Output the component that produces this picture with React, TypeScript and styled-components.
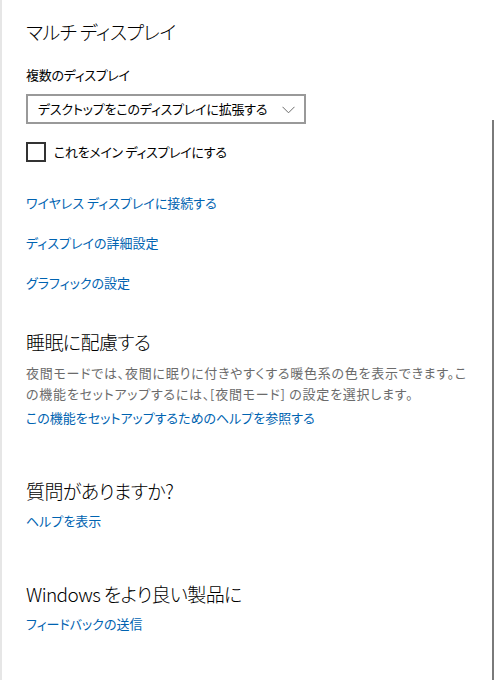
import React from "react";
import styled, { createGlobalStyle } from "styled-components";

const GlobalStyle = createGlobalStyle`
  html, body {
    margin: 0;
    padding: 0;
    background: #ffffff;
  }
  body {
    font-family: "Noto Sans CJK JP", "Noto Sans", sans-serif;
    font-feature-settings: "palt";
    color: #000000;
  }
`;

const LINKS = ["ワイヤレス ディスプレイに接続する", "ディスプレイの詳細設定", "グラフィックの設定"];

export default function App() {
  return (
    <>
      <GlobalStyle />
      <Page>
        <Content>
          <Heading>マルチ ディスプレイ</Heading>
          <Label>複数のディスプレイ</Label>
          <Select>
            <span>デスクトップをこのディスプレイに拡張する</span>
            <svg width="13" height="8" viewBox="0 0 13 8">
              <path d="M0.5 0.8 L6.5 6.8 L12.5 0.8" fill="none" stroke="#6b6b6b" strokeWidth="1" />
            </svg>
          </Select>
          <CheckRow>
            <CheckBox />
            <span>これをメイン ディスプレイにする</span>
          </CheckRow>
          <LinkList>
            {LINKS.map((text) => (
              <Link key={text}>{text}</Link>
            ))}
          </LinkList>

          <Heading $top={35}>睡眠に配慮する</Heading>
          <Paragraph>
            夜間モードでは、夜間に眠りに付きやすくする暖色系の色を表示できます。この機能をセットアップするには、[夜間モード] の設定を選択します。
          </Paragraph>
          <Link $top={4}>この機能をセットアップするためのヘルプを参照する</Link>

          <Heading $top={49}>質問がありますか?</Heading>
          <Link $top={6}>ヘルプを表示</Link>

          <Heading $top={49}>Windows をより良い製品に</Heading>
          <Link $top={6}>フィードバックの送信</Link>
        </Content>
        <ScrollThumb />
      </Page>
    </>
  );
}

const Page = styled.div`
  position: relative;
  width: 496px;
  height: 680px;
  box-sizing: border-box;
  border-left: 2px solid #e6e6e6;
  background: #ffffff;
  overflow: hidden;
`;

const Content = styled.div`
  display: flex;
  flex-direction: column;
  align-items: flex-start;
  padding: 18px 0 0 24px;
`;

const ScrollThumb = styled.div`
  position: absolute;
  top: 120px;
  bottom: 0;
  right: 2px;
  width: 2px;
  background: #7a7a7a;
`;

const Heading = styled.div<{ $top?: number }>`
  margin-top: ${(p) => p.$top ?? 0}px;
  font-size: 19px;
  line-height: 28px;
  font-weight: 300;
  letter-spacing: -0.6px;
  color: #000000;
`;

const Label = styled.div`
  margin-top: 19px;
  font-size: 13px;
  line-height: 20px;
  letter-spacing: -0.3px;
  color: #000000;
`;

const Select = styled.div`
  margin-top: 9px;
  width: 280px;
  height: 30px;
  box-sizing: border-box;
  border: 2px solid #999999;
  padding: 0 9px 0 10px;
  display: flex;
  align-items: center;
  justify-content: space-between;
  font-size: 13px;
  letter-spacing: -0.2px;
  white-space: nowrap;
  color: #000000;
  line-height: 20px;

  svg {
    margin-top: 1px;
    flex-shrink: 0;
  }
`;

const CheckRow = styled.div`
  margin-top: 18px;
  display: flex;
  align-items: center;
  gap: 8px;
  font-size: 13px;
  line-height: 20px;
  letter-spacing: -0.3px;
  color: #000000;
`;

const CheckBox = styled.div`
  width: 20px;
  height: 20px;
  box-sizing: border-box;
  border: 2px solid #333333;
`;

const LinkList = styled.div`
  margin-top: 31px;
  display: flex;
  flex-direction: column;
  gap: 20px;
`;

const Link = styled.div<{ $top?: number }>`
  margin-top: ${(p) => p.$top ?? 0}px;
  font-size: 13px;
  line-height: 20px;
  letter-spacing: 0;
  color: #0063b1;
`;

const Paragraph = styled.p`
  margin: 6px 0 0;
  width: 452px;
  font-size: 13px;
  line-height: 21px;
  letter-spacing: 0.75px;
  color: #6b6b6b;
`;
